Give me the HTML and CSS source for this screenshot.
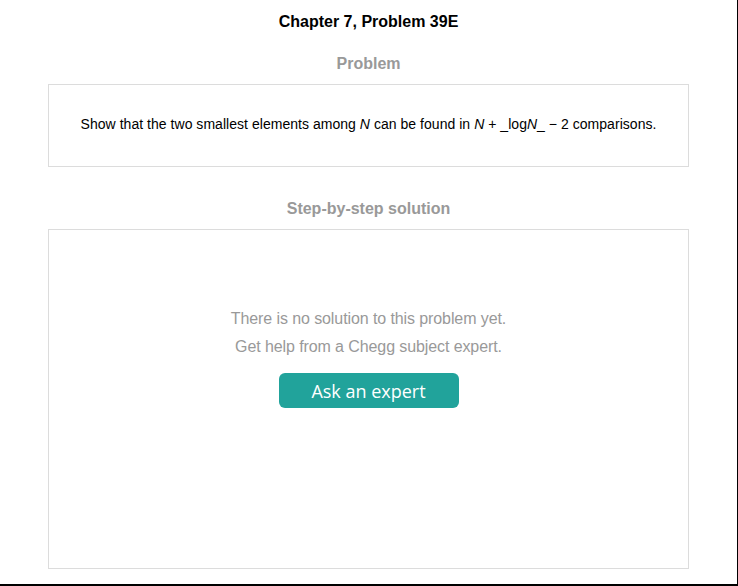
FILE: index.html
```html
<!DOCTYPE html>
<html>
<head>
<meta charset="utf-8">
<link rel="stylesheet" href="styles.css">
</head>
<body>
<div class="page">
  <div class="content">
    <h1 class="title">Chapter 7, Problem 39E</h1>
    <h2 class="section-title">Problem</h2>
    <div class="box problem-box">
      <p class="problem-text">Show that the two smallest elements among <i>N</i> can be found in <i>N</i> + _log<i>N</i>_ &minus; 2 comparisons.</p>
    </div>
    <h2 class="section-title solution-title">Step-by-step solution</h2>
    <div class="box solution-box">
      <p class="muted">There is no solution to this problem yet.</p>
      <p class="muted">Get help from a Chegg subject expert.</p>
      <button class="ask-btn">Ask an expert</button>
    </div>
  </div>
</div>
</body>
</html>
```
FILE: styles.css
```css
html, body {
  margin: 0;
  padding: 0;
  background: #fff;
}
.page {
  width: 737px;
  height: 584px;
  border-right: 1px solid #000;
  border-bottom: 2px solid #000;
  font-family: "Liberation Sans", Arial, sans-serif;
  overflow: hidden;
}
.content {
  width: 737px;
  padding-top: 13px;
  display: flex;
  flex-direction: column;
  align-items: center;
}
.title {
  margin: 0;
  font-size: 16px;
  line-height: 18px;
  font-weight: bold;
  color: #000;
}
.section-title {
  margin: 24px 0 0;
  font-size: 16px;
  line-height: 18px;
  font-weight: bold;
  color: #999;
}
.solution-title {
  margin-top: 33px;
}
.box {
  width: 639px;
  border: 1px solid #dcdcdc;
  margin-top: 11px;
  display: flex;
  flex-direction: column;
  align-items: center;
}
.problem-box {
  padding: 31px 0 34px;
}
.problem-text {
  margin: 0;
  font-size: 14px;
  line-height: 16px;
  color: #000;
  letter-spacing: 0.0025em;
}
.solution-box {
  height: 263px;
  padding-top: 75px;
}
.muted {
  margin: 0;
  font-size: 16px;
  line-height: 28px;
  color: #999;
  letter-spacing: -0.006em;
}
.ask-btn {
  margin-top: 12px;
  width: 180px;
  height: 35px;
  border: none;
  border-radius: 6px;
  background: #21a39b;
  color: #fff;
  font-family: "Open Sans", sans-serif;
  font-size: 18px;
  padding: 1px 0 0;
  line-height: 34px;
}
```
